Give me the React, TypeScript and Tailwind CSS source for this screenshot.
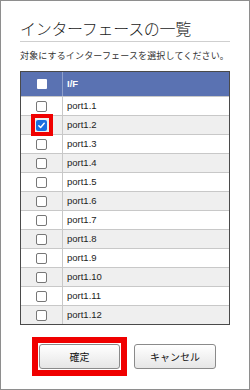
import * as React from 'react';

const ports = Array.from({ length: 12 }, (_, i) => `port1.${i + 1}`);

function Box({ checked = false, header = false }: { checked?: boolean; header?: boolean }): React.JSX.Element {
  if (header) {
    return <span className="block h-[10px] w-[10px] rounded-[1px] bg-white" />;
  }
  if (checked) {
    return (
      <span className="flex h-[11px] w-[11px] items-center justify-center rounded-[2px] bg-[#1a6fe0]">
        <svg width="9" height="9" viewBox="0 0 10 10" fill="none" aria-hidden="true">
          <path d="M2 5.2l2 2L8 2.6" stroke="#fff" strokeWidth="1.6" strokeLinecap="round" strokeLinejoin="round" />
        </svg>
      </span>
    );
  }
  return <span className="block h-[11px] w-[11px] rounded-[2px] border border-[#777] bg-white" />;
}

export default function App(): React.JSX.Element {
  return (
    <div className="flex h-[390px] w-[250px] flex-col border border-[#8e8e8e] bg-white pl-[19px] pr-[19px] font-['Noto_Sans_CJK_JP',sans-serif] text-[#222]">
      <h1 className="mt-[16px] h-[22px] text-[16px] font-light leading-[22px] tracking-[-0.3px] text-[#222]">
        インターフェースの一覧
      </h1>
      <div className="mt-[2px] h-px w-[210px] bg-[#cfcfcf]" />
      <p className="mt-[8px] h-[12px] text-[9px] leading-[12px] tracking-[0.15px] text-[#333]">
        対象にするインターフェースを選択してください。
      </p>

      <div className="mt-[9px] w-[210px] border border-[#4a4a4a] font-['Liberation_Sans',Arial,sans-serif] text-[9.5px]">
        <div className="flex h-[24px] items-center bg-[#5a72b2] text-white">
          <div className="flex h-full w-[42px] items-center justify-center border-r border-[#8fa0cc]">
            <Box header />
          </div>
          <div className="pl-[4px] font-bold">I/F</div>
        </div>
        {ports.map((p, i) => (
          <div
            key={p}
            className={`flex h-[19px] items-center border-t border-[#c8c8c8] ${i % 2 === 1 ? 'bg-[#efefef]' : 'bg-white'}`}
          >
            <div className="relative flex h-full w-[42px] items-center justify-center border-r border-[#c8c8c8]">
              <Box checked={i === 1} />
              {i === 1 && (
                <span className="pointer-events-none absolute left-[10px] top-[-2px] h-[22px] w-[22px] border-[4px] border-[#f00000]" />
              )}
            </div>
            <div className="pl-[4px] text-[#222]">{p}</div>
          </div>
        ))}
      </div>

      <div className="mt-[12px] flex gap-[7px] pl-[12px]">
        <div className="border-[6px] border-[#f00000] p-px">
          <button
            type="button"
            className="flex h-[25px] w-[81px] items-center justify-center rounded-[3px] border border-[#8a8a8a] bg-gradient-to-b from-white to-[#e6e6e6] text-[10px] text-[#111]"
          >
            確定
          </button>
        </div>
        <div className="pt-[7px]">
          <button
            type="button"
            className="flex h-[25px] w-[82px] items-center justify-center rounded-[3px] border border-[#8a8a8a] bg-gradient-to-b from-white to-[#e6e6e6] text-[10px] text-[#111]"
          >
            キャンセル
          </button>
        </div>
      </div>
    </div>
  );
}
